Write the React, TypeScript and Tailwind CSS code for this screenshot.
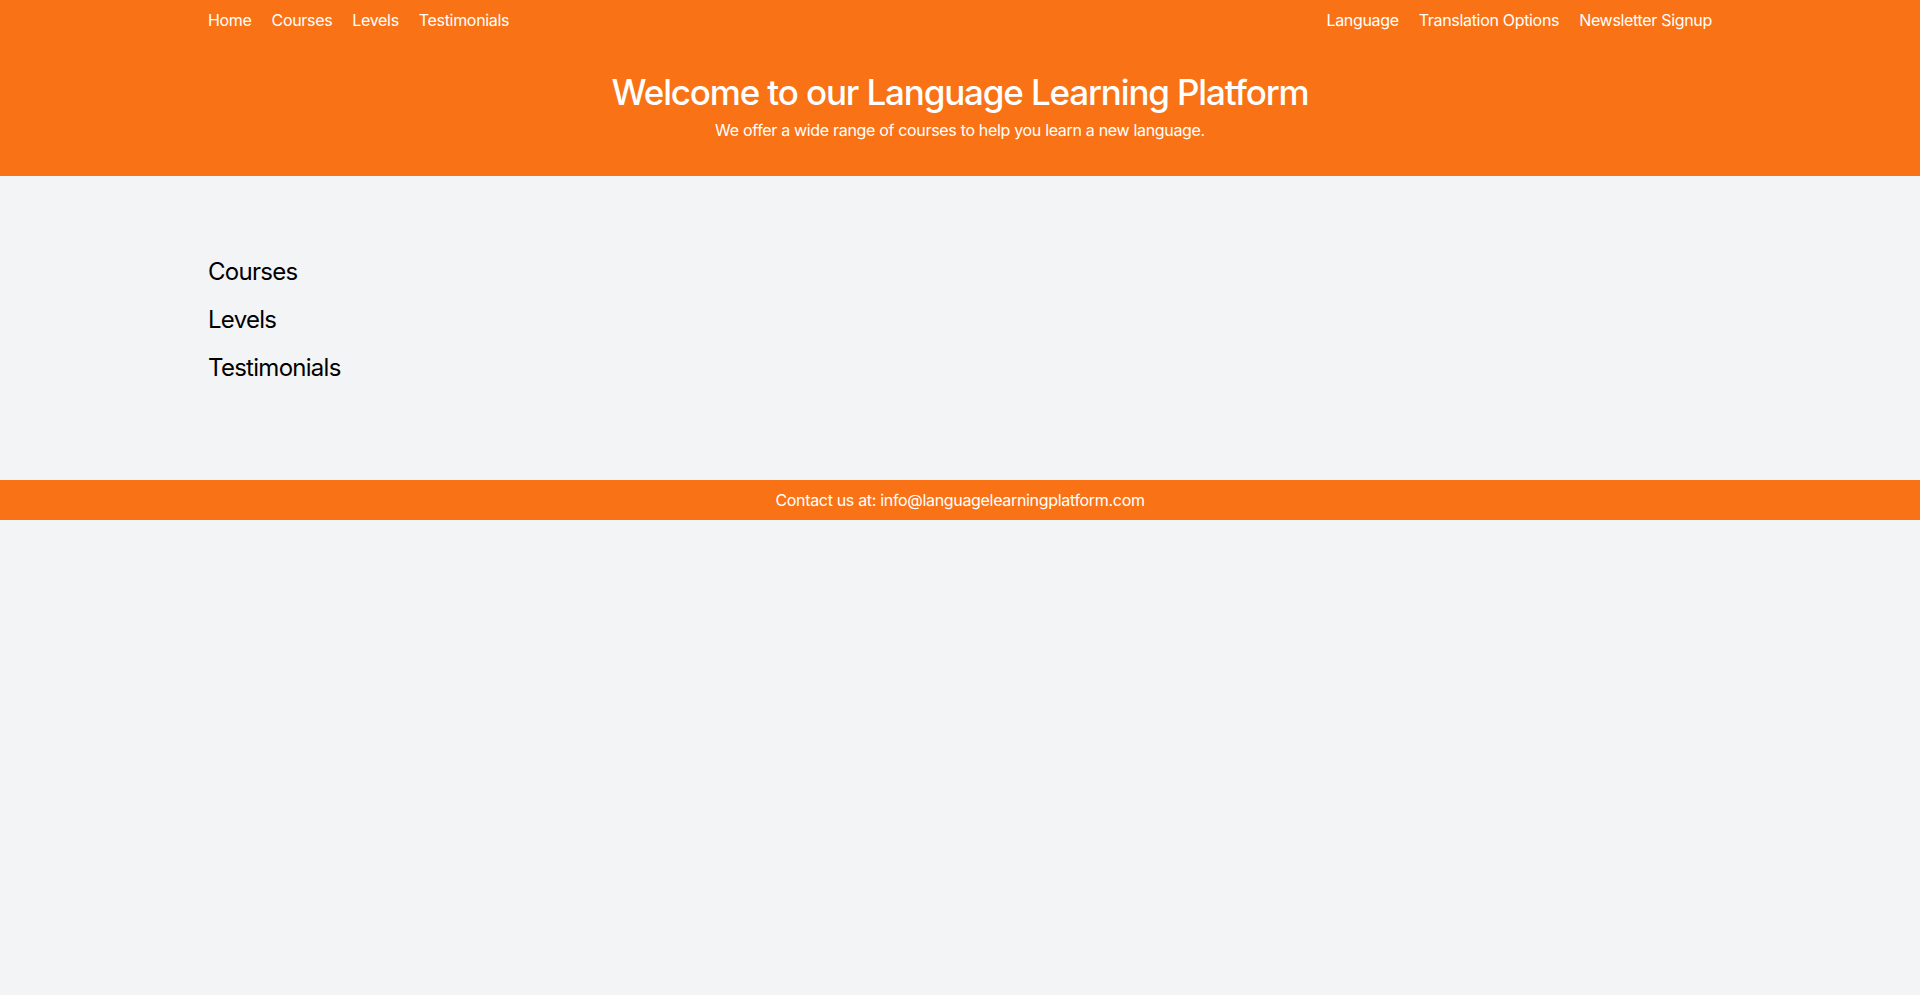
import * as React from 'react'

const NAV_LEFT = ['Home', 'Courses', 'Levels', 'Testimonials']
const NAV_RIGHT = ['Language', 'Translation Options', 'Newsletter Signup']
const SECTIONS = ['Courses', 'Levels', 'Testimonials']

export default function App() {
  return (
    <div className="min-h-[995px] bg-[#f3f4f6] font-['Inter','Liberation_Sans',sans-serif] tracking-[-0.02em] text-black">
      <header className="bg-[#f97316] text-white">
        <nav className="mx-auto flex max-w-[1536px] items-center justify-between px-4 py-2">
          <ul className="flex gap-5">
            {NAV_LEFT.map((item) => (
              <li key={item}>
                <a href="#" className="text-base">{item}</a>
              </li>
            ))}
          </ul>
          <ul className="flex gap-5">
            {NAV_RIGHT.map((item) => (
              <li key={item}>
                <a href="#" className="text-base">{item}</a>
              </li>
            ))}
          </ul>
        </nav>
        <div className="mx-auto max-w-[1536px] px-4 pt-8 pb-[34px] text-center">
          <h1 className="text-[35px] leading-10 font-medium tracking-[-0.033em]">
            Welcome to our Language Learning Platform
          </h1>
          <p className="mt-1.5 text-base">We offer a wide range of courses to help you learn a new language.</p>
        </div>
      </header>

      <main className="mx-auto max-w-[1536px] px-4 py-20">
        {SECTIONS.map((s) => (
          <section key={s} className="mb-4">
            <h2 className="text-2xl font-normal tracking-[-0.03em]">{s}</h2>
          </section>
        ))}
      </main>

      <footer className="bg-[#f97316] py-2 text-center text-base text-white">
        Contact us at: info@languagelearningplatform.com
      </footer>
    </div>
  )
}
